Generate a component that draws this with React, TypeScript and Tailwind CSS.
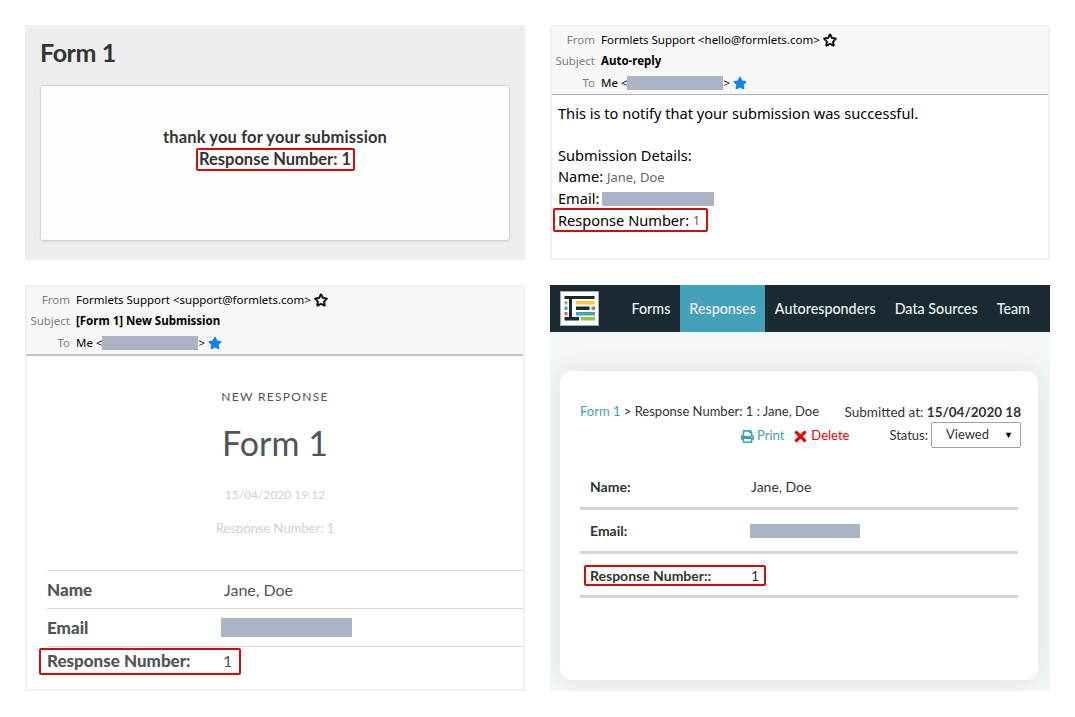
import type { ReactNode } from "react";
import { FaPrint, FaRegStar, FaStar, FaTimes } from "react-icons/fa";

const NAV = ["Forms", "Responses", "Autoresponders", "Data Sources", "Team"];

function Redacted({ className }: { className: string }) {
  return <span className={`inline-block bg-[#a9b5c6] ${className}`} />;
}

function RedBox({ className, children }: { className: string; children: ReactNode }) {
  return (
    <div className={`rounded-[2px] border-2 border-[#d00d0d] ${className}`}>{children}</div>
  );
}

function MailRow({ label, h, children }: { label: string; h: string; children: ReactNode }) {
  return (
    <div className={`flex items-center ${h}`}>
      <span className="w-[44px] shrink-0 pr-[1px] text-right text-[#808080]">{label}</span>
      <div className="ml-[5px] flex items-center text-black">{children}</div>
    </div>
  );
}

function MailHeader({ from, subject }: { from: string; subject: string }) {
  return (
    <div className="bg-[#f7f7f7] pt-[2px] font-['Noto_Sans',sans-serif] text-[11.5px]">
      <MailRow label="From" h="h-[21px]">
        <span>Formlets Support &lt;{from}&gt;</span>
        <FaRegStar className="ml-[3px] stroke-black stroke-[30] text-[14px] text-black" />
      </MailRow>
      <MailRow label="Subject" h="h-[21px]">
        <span className="font-bold">{subject}</span>
      </MailRow>
      <MailRow label="To" h="h-[23px] pt-[1px]">
        <span>Me &lt;</span>
        <Redacted className="h-[14px] w-[96px]" />
        <span>&gt;</span>
        <FaStar className="ml-[3px] text-[14px] text-[#0f80f5]" />
      </MailRow>
    </div>
  );
}

function SuccessPanel() {
  return (
    <section className="flex flex-col bg-[#eeeef0] px-[15px] pt-[12px] font-['Lato',sans-serif] text-[#333]">
      <h1 className="text-[25px] leading-[30px] font-bold tracking-[-0.4px]">Form 1</h1>
      <div className="mt-[18px] flex h-[156px] flex-col items-center rounded-[3px] border border-[#d5d5d7] bg-[#fdfdfd] pt-[41px] text-[16.5px] leading-[21px] font-bold shadow-[0_1px_2px_rgba(0,0,0,0.08)]">
        <p className="tracking-[0.15px]">thank you for your submission</p>
        <RedBox className="flex h-[23px] w-[159px] items-center justify-center whitespace-nowrap">
          Response Number: 1
        </RedBox>
      </div>
    </section>
  );
}

function AutoReplyPanel() {
  return (
    <section className="flex flex-col border-2 border-[#f0f0f0] bg-white">
      <div className="border-b border-[#a9b5c6]">
        <MailHeader from="hello@formlets.com" subject="Auto-reply" />
      </div>
      <div className="flex flex-col pt-[8px] pl-[6px] font-['Noto_Sans',sans-serif] text-[14.6px] leading-[21px] text-black">
        <p>This is to notify that your submission was successful.</p>
        <p className="mt-[21px]">Submission Details:</p>
        <p>
          Name: <span className="text-[13px] text-[#666]">Jane, Doe</span>
        </p>
        <p className="flex items-center">
          Email: <Redacted className="ml-[3px] h-[14px] w-[112px]" />
        </p>
        <RedBox className="-mt-[1px] -ml-[5px] flex h-[24px] w-[155px] items-center pl-[3px]">
          Response Number:&nbsp;<span className="text-[13px] text-[#666]">1</span>
        </RedBox>
      </div>
    </section>
  );
}

function SubmissionRow({ label, children }: { label: string; children: ReactNode }) {
  return (
    <div className="flex h-[38px] items-center border-t border-[#d8d8d8]">
      <span className="w-[174px] shrink-0 text-[17px] font-black">{label}</span>
      {children}
    </div>
  );
}

function NewSubmissionPanel() {
  return (
    <section className="flex flex-col border-2 border-[#f0f0f0] bg-white">
      <div className="border-b-2 border-[#bcc4d0]">
        <MailHeader from="support@formlets.com" subject="[Form 1] New Submission" />
      </div>
      <div className="flex flex-col items-center font-['Lato',sans-serif] text-[#4f5558]">
        <p className="mt-[33px] text-[12px] leading-[16px] tracking-[1.3px]">NEW RESPONSE</p>
        <p className="mt-[16px] text-[34px] leading-[44px]">Form 1</p>
        <p className="mt-[21px] text-[12px] leading-[18px] text-[#d0d0d0]">15/04/2020 19:12</p>
        <p className="mt-[15px] text-[13px] leading-[18px] text-[#d0d0d0]">Response Number: 1</p>
      </div>
      <div className="mt-[33px] ml-[20px] flex flex-col font-['Lato',sans-serif] text-[#4f5558]">
        <SubmissionRow label="Name">
          <span className="pl-[3px] text-[16px]">Jane, Doe</span>
        </SubmissionRow>
        <SubmissionRow label="Email">
          <Redacted className="h-[19px] w-[131px]" />
        </SubmissionRow>
        <div className="border-t border-[#d8d8d8] pt-[1px]">
          <RedBox className="-ml-[8px] flex h-[27px] w-[202px] items-center pb-[1px] pl-[6px]">
            <span className="w-[176px] shrink-0 text-[17px] font-black">Response Number:</span>
            <span className="text-[16px]">1</span>
          </RedBox>
        </div>
      </div>
    </section>
  );
}

function Logo() {
  return (
    <svg viewBox="0 0 39 35" className="h-[35px] w-[39px] shrink-0">
      <rect x="0.5" y="0.5" width="38" height="34" fill="#fff" stroke="#a3abaf" />
      <rect x="4.5" y="5" width="30" height="3" fill="#1b2a32" />
      <rect x="9" y="8" width="3" height="19" fill="#1b2a32" />
      <rect x="4.5" y="26" width="14.5" height="3.5" fill="#1b2a32" />
      <rect x="4.5" y="10" width="3" height="3.5" fill="#9bc03b" />
      <rect x="16" y="10" width="19" height="3.5" fill="#fbcb3a" />
      <rect x="4.5" y="15.5" width="3" height="3.5" fill="#43a2b9" />
      <rect x="16" y="15.5" width="13.5" height="3.5" fill="#1b2a32" />
      <rect x="31.5" y="15.5" width="3.5" height="3.5" fill="#f0584f" />
      <rect x="4.5" y="21" width="3" height="3.5" fill="#f0584f" />
      <rect x="16" y="21" width="19" height="3.5" fill="#43a2b9" />
      <rect x="21" y="26" width="14" height="3.5" fill="#9bc03b" />
    </svg>
  );
}

function ResponseRow({ label, children }: { label: string; children: ReactNode }) {
  return (
    <div className="flex h-[44px] items-center border-b-[3px] border-[#d4d4d4] pl-[10px]">
      <span className="w-[160px] shrink-0 font-bold">{label}</span>
      {children}
    </div>
  );
}

function DashboardPanel() {
  return (
    <section className="flex flex-col overflow-hidden bg-[#f4f7f8] font-['Lato',sans-serif] text-[13px] text-[#333]">
      <nav className="z-10 flex h-[47px] items-center bg-[#1b2a32] pl-[10px] text-[14.3px] font-medium whitespace-nowrap text-[#eef2f3]">
        <Logo />
        <div className="ml-[23px] flex h-full">
          {NAV.map((item) => (
            <span
              key={item}
              className={`flex items-center px-[9.5px] ${item === "Responses" ? "bg-[#43a2b9]" : ""}`}
            >
              {item}
            </span>
          ))}
        </div>
      </nav>
      <div className="mt-[39px] mr-[12px] ml-[10px] h-[309px] rounded-[12px] bg-white px-[20px] pt-[32px] shadow-[0_0_32px_rgba(0,0,0,0.09)]">
        <div className="flex h-[18px] items-center justify-between">
          <p>
            <span className="text-[#43a2b9]">Form 1</span> &gt; Response Number: 1 : Jane, Doe
          </p>
          <p className="mr-[-3px] text-[13.5px]">
            Submitted at: <span className="font-bold">15/04/2020 18</span>
          </p>
        </div>
        <div className="mt-[1px] flex h-[26px] items-center">
          <span className="ml-[161px] flex items-center pt-[2px] text-[#43a2b9]">
            <FaPrint className="mr-[3px] text-[13px]" /> Print
          </span>
          <span className="ml-[8px] flex items-center pt-[2px] text-[#f00000]">
            <FaTimes className="mr-[2px] text-[17px]" /> Delete
          </span>
          <span className="ml-[40px] pt-[2px]">Status:</span>
          <div className="ml-[3px] flex h-[26px] w-[90px] shrink-0 items-center justify-between rounded-[2px] border border-[#a0a0a0] bg-white pr-[7px] pl-[14px]">
            <span>Viewed</span>
            <span className="text-[9px] text-black">▼</span>
          </div>
        </div>
        <div className="mt-[18px] flex flex-col text-[14px]">
          <ResponseRow label="Name:">
            <span className="pl-[1px]">Jane, Doe</span>
          </ResponseRow>
          <ResponseRow label="Email:">
            <Redacted className="h-[14px] w-[110px]" />
          </ResponseRow>
          <div className="flex h-[44px] border-b-[3px] border-[#d4d4d4] pt-[11px]">
            <RedBox className="ml-[4px] flex h-[21px] w-[182px] items-center pl-[4px]">
              <span className="w-[161px] shrink-0 font-bold">Response Number::</span>
              <span>1</span>
            </RedBox>
          </div>
        </div>
      </div>
    </section>
  );
}

export default function App() {
  return (
    <main className="h-[717px] w-[1075px] overflow-hidden bg-white p-[25px]">
      <div className="grid grid-cols-[500px_500px] grid-rows-[235px_406px] gap-[25px]">
        <SuccessPanel />
        <AutoReplyPanel />
        <NewSubmissionPanel />
        <DashboardPanel />
      </div>
    </main>
  );
}
